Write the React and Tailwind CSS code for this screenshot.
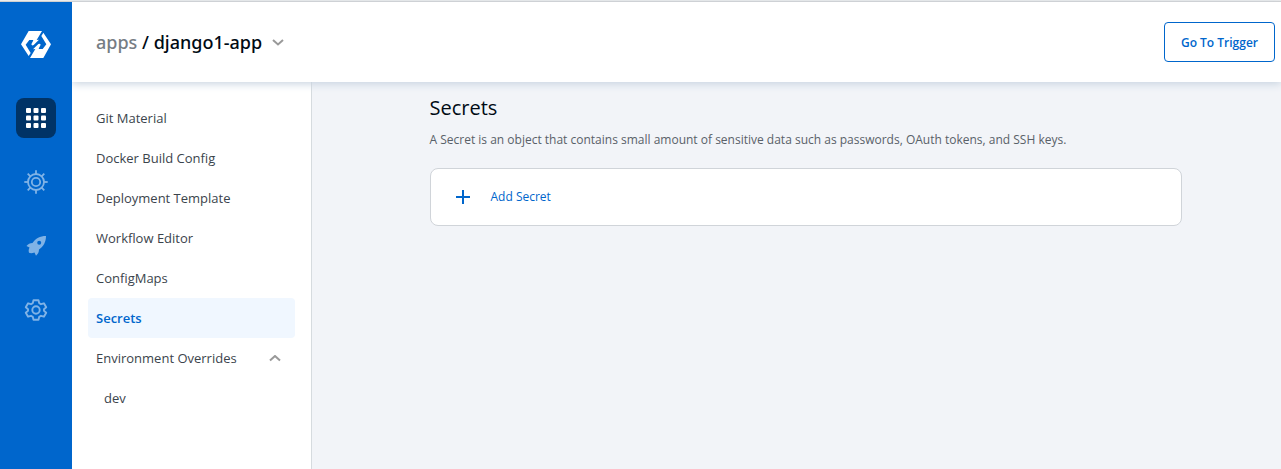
import React from "react";

const navItems = [
  "Git Material",
  "Docker Build Config",
  "Deployment Template",
  "Workflow Editor",
  "ConfigMaps",
  "Secrets",
];

function Logo() {
  return (
    <svg viewBox="0 0 90 81" className="h-[27px] w-[30px]" fill="#fff" aria-hidden="true">
      <path d="M23 0H63L47 27L54 26L38 42Q33 45 31 40L36 30L37 27H25L14 41L29 66L23 75L0 40Z" />
      <path d="M67 5L90 40L67 81H27L43 54L36 55L52 39Q57 36 59 41L54 51L53 54H65L76 40L61 15Z" />
    </svg>
  );
}

function GridIcon() {
  const steps = [2, 9.5, 17];
  return (
    <svg viewBox="0 0 24 24" className="size-6" fill="#fff" aria-hidden="true">
      {steps.map((y) =>
        steps.map((x) => <rect key={`${x}-${y}`} x={x} y={y} width="5" height="5" rx="1" />)
      )}
    </svg>
  );
}

function HelmIcon() {
  const angles = [0, 45, 90, 135, 180, 225, 270, 315];
  return (
    <svg viewBox="0 0 24 24" className="size-6" fill="none" stroke="#80b3e6" strokeWidth="1.8" aria-hidden="true">
      <circle cx="12" cy="12" r="8" />
      <circle cx="12" cy="12" r="4.2" />
      {angles.map((a) => (
        <path key={a} d="M12 4V0.3" transform={`rotate(${a} 12 12)`} />
      ))}
    </svg>
  );
}

function RocketIcon() {
  return (
    <svg viewBox="0 0 24 24" className="size-6" fill="#80b3e6" fillRule="evenodd" aria-hidden="true">
      <path d="M22 2C16 2 11.500 4.500 8.500 9C6 9 4 10 2.500 12L5.500 13.500C4.500 15.500 4.500 17 5 18.800C6.500 19.500 8.500 19.300 10.500 18.500L12 21.700C14 20 15 18 15 15.500C19.500 12.500 22 8 22 2ZM15.200 6.700A2 2 0 1 1 15.200 10.700A2 2 0 1 1 15.200 6.700Z" />
    </svg>
  );
}

function GearIcon() {
  return (
    <svg viewBox="0 0 24 24" className="size-6" fill="none" stroke="#80b3e6" strokeWidth="1.9" strokeLinejoin="round" aria-hidden="true">
      <circle cx="12" cy="12" r="3.700" />
      <path d="M9.500 2.200H14.500L15.200 5.100L17 6.200L19.900 5.300L22.200 9.300L20 11.200V12.800L22.200 14.700L19.900 18.700L17 17.800L15.200 18.900L14.500 21.800H9.500L8.800 18.900L7 17.800L4.100 18.700L1.800 14.700L4 12.800V11.200L1.800 9.300L4.100 5.300L7 6.200L8.800 5.100Z" />
    </svg>
  );
}

function Chevron({ up = false }) {
  return (
    <svg viewBox="0 0 12 8" className="h-2 w-3" fill="none" stroke="#999" strokeWidth="2" aria-hidden="true">
      <path d={up ? "M1 5.500L6 1L11 5.500" : "M1 2L6 6.500L11 2"} />
    </svg>
  );
}

function RailLink({ label, active = false, children }) {
  return (
    <a
      href="#"
      aria-label={label}
      className={
        active
          ? "flex size-10 items-center justify-center rounded-lg bg-[#003366]"
          : "flex size-10 items-center justify-center rounded-lg"
      }
    >
      {children}
    </a>
  );
}

export default function App() {
  return (
    <div className="flex min-h-screen flex-col border-t border-[#ececec] bg-[#f2f4f8] font-['Open_Sans','Noto_Sans',sans-serif]">
      <div className="flex flex-1 border-t border-[#d0d0d0]">
        <nav aria-label="Main" className="relative z-20 flex w-18 shrink-0 flex-col items-center gap-6 bg-[#0066cc] pt-6">
          <a href="#" aria-label="Home" className="flex h-12 items-center pb-3">
            <Logo />
          </a>
          <RailLink label="Applications" active>
            <GridIcon />
          </RailLink>
          <RailLink label="Charts">
            <HelmIcon />
          </RailLink>
          <RailLink label="Deployments">
            <RocketIcon />
          </RailLink>
          <RailLink label="Settings">
            <GearIcon />
          </RailLink>
        </nav>

        <div className="flex min-w-0 flex-1 flex-col">
          <header className="relative z-10 flex h-20 shrink-0 items-center justify-between bg-white pr-1.5 pl-6 shadow-[0_2px_8px_0_#c8d4e0]">
            <div className="flex items-center gap-2.5">
              <h1 className="font-['Noto_Sans','Open_Sans',sans-serif] text-lg font-medium text-[#000a14]">
                <a href="#" className="text-[#767d84]">apps</a>
                <span> / django1-app</span>
              </h1>
              <button type="button" aria-label="Switch app">
                <Chevron />
              </button>
            </div>
            <button type="button" className="h-10 rounded border border-[#0066cc] bg-white px-4 pt-0.5 text-xs font-semibold text-[#0066cc]">
              Go To Trigger
            </button>
          </header>

          <div className="flex flex-1">
            <aside className="w-60 shrink-0 border-r border-[#d6dbdf] bg-white p-4 text-[13px] text-[#3b444c]">
              <nav aria-label="App configuration" className="flex flex-col">
                {navItems.map((item) => (
                  <a
                    key={item}
                    href="#"
                    className={
                      item === "Secrets"
                        ? "flex h-10 items-center rounded bg-[#f0f7ff] px-2 pt-0.5 font-semibold text-[#0066cc]"
                        : "flex h-10 items-center rounded px-2 pt-0.5"
                    }
                  >
                    {item}
                  </a>
                ))}
                <button type="button" aria-expanded="true" className="flex h-10 items-center justify-between pt-0.5 pr-3.5 pl-2 text-left">
                  Environment Overrides
                  <Chevron up />
                </button>
                <a href="#" className="flex h-10 items-center px-4 pt-0.5">dev</a>
              </nav>
            </aside>

            <main className="min-w-0 flex-1 pt-3 pr-6 pl-[42px]">
              <div className="mx-auto max-w-[752px]">
                <h2 className="text-xl leading-7 text-[#000a14]">Secrets</h2>
                <p className="mt-2 text-xs leading-5 text-[#596168]">
                  A Secret is an object that contains small amount of sensitive data such as passwords, OAuth tokens, and SSH keys.
                </p>
                <button type="button" className="mt-4.5 flex h-[58px] w-full items-center gap-5 rounded-lg border border-[#d0d4d9] bg-white px-6 text-xs text-[#0066cc]">
                  <svg viewBox="0 0 16 16" className="size-4" stroke="#0066cc" strokeWidth="2" aria-hidden="true">
                    <path d="M8 1V15M1 8H15" />
                  </svg>
                  Add Secret
                </button>
              </div>
            </main>
          </div>
        </div>
      </div>
    </div>
  );
}
